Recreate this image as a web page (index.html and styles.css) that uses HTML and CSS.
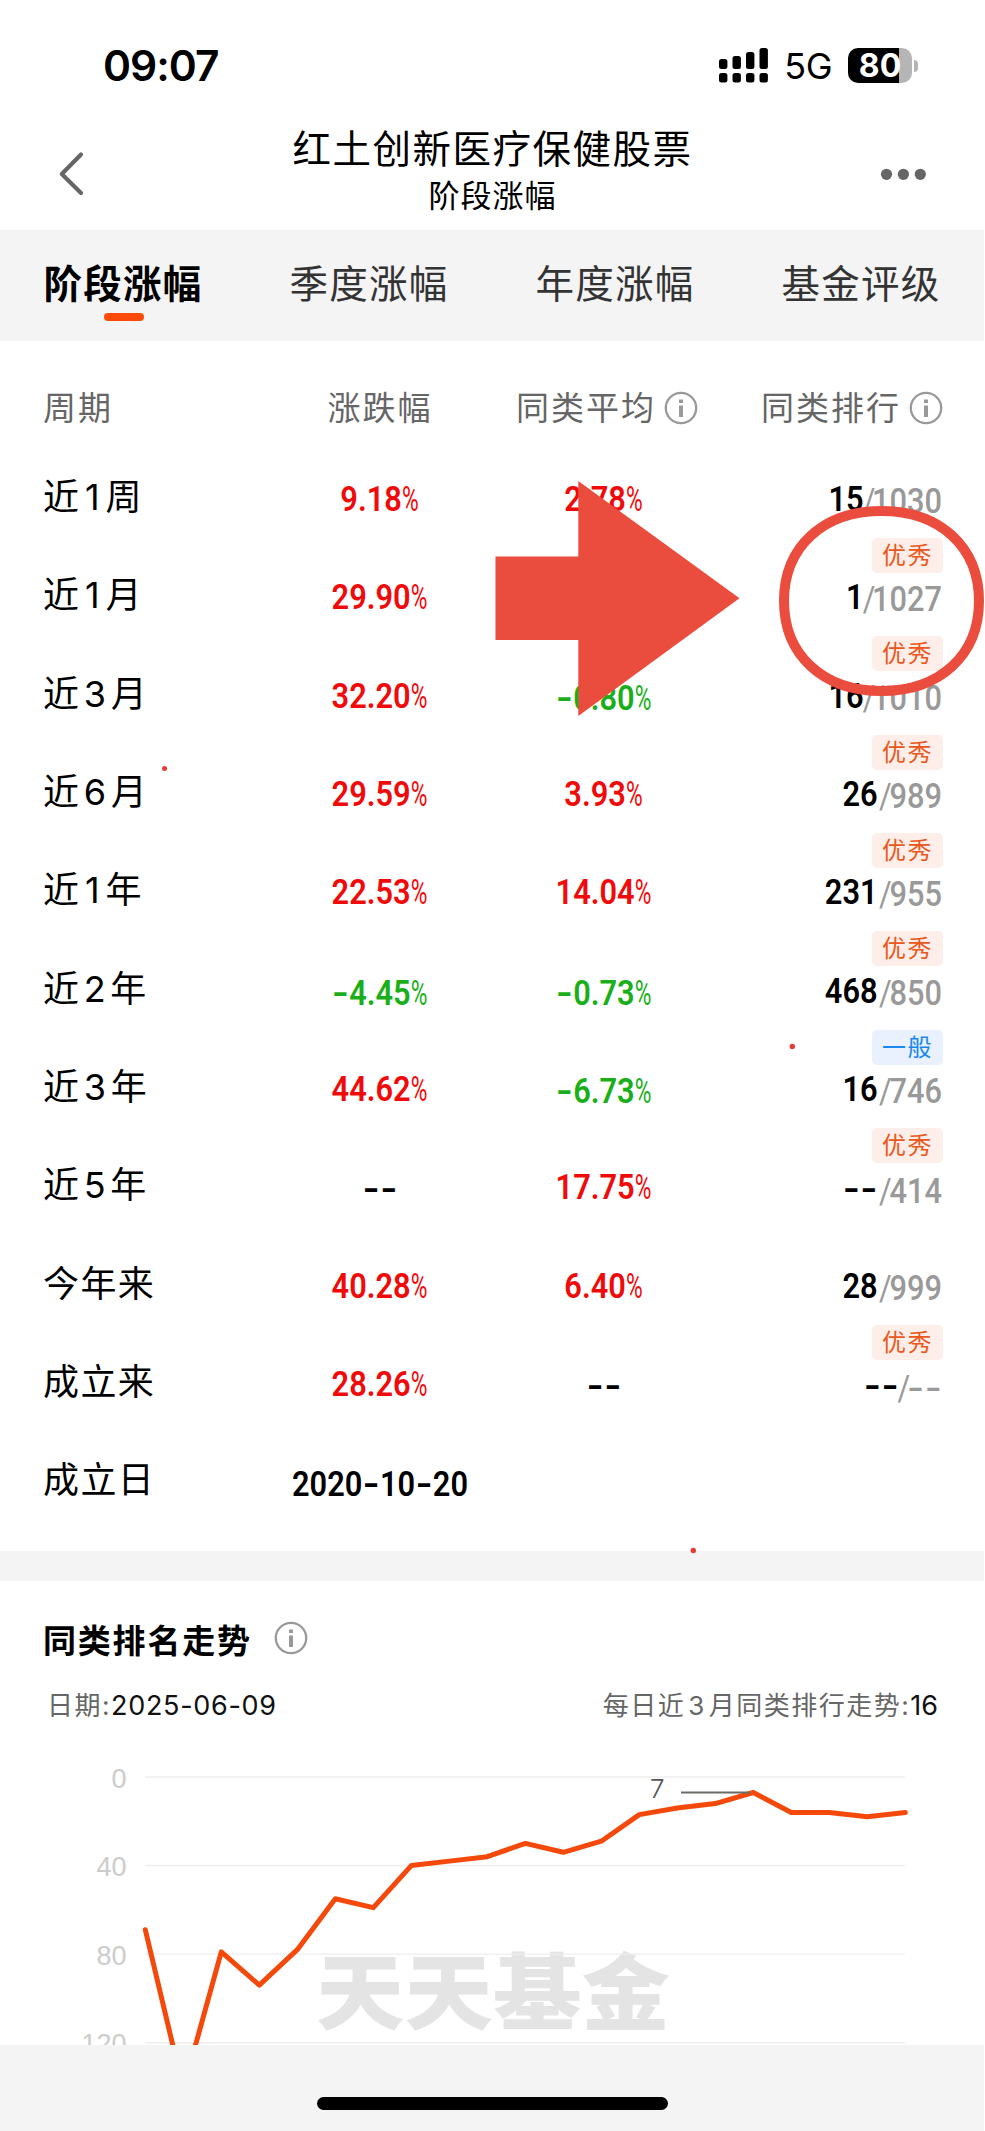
FILE: index.html
```html
<!DOCTYPE html>
<html lang="zh-CN">
<head>
  <meta charset="UTF-8">
  <title>阶段涨幅</title>
  <link rel="stylesheet" href="styles.css">
</head>
<body>
<div class="screen">

  <!-- 状态栏 -->
  <div class="status">
    <span class="time">09:07</span>
    <div class="status-right">
      <svg class="signal" width="50" height="36" viewBox="0 0 50 36">
        <rect x="0" y="11" width="8.4" height="10" rx="2.5"/>
        <rect x="13.5" y="8" width="8.4" height="13" rx="2.5"/>
        <rect x="27" y="4" width="8.4" height="17" rx="2.5"/>
        <rect x="40.5" y="0" width="8.4" height="21" rx="2.5"/>
        <rect x="0" y="25" width="8.4" height="9.5" rx="2.5"/>
        <rect x="13.5" y="25" width="8.4" height="9.5" rx="2.5"/>
        <rect x="27" y="25" width="8.4" height="9.5" rx="2.5"/>
        <rect x="40.5" y="25" width="8.4" height="9.5" rx="2.5"/>
      </svg>
      <span class="net">5G</span>
      <div class="battery"><span>80</span></div>
      <div class="battery-tip"></div>
    </div>
  </div>

  <!-- 标题 -->
  <div class="nav">
    <svg width="60" height="100" viewBox="0 0 60 100">
      <path d="M37 30.500L17.800 50L37 69" fill="none" stroke="#666" stroke-width="4.200" stroke-linecap="round" stroke-linejoin="round"/>
    </svg>
    <div class="nav-title">
      <h1>红土创新医疗保健股票</h1>
      <p>阶段涨幅</p>
    </div>
    <svg width="60" height="100" viewBox="0 0 60 100" fill="#666">
      <circle cx="22.500" cy="50.300" r="5.600"/>
      <circle cx="39.400" cy="50.300" r="5.600"/>
      <circle cx="56.300" cy="50.300" r="5.600"/>
    </svg>
  </div>

  <div class="tabs">
    <div class="tab active">阶段涨幅</div>
    <div class="tab">季度涨幅</div>
    <div class="tab">年度涨幅</div>
    <div class="tab">基金评级</div>
  </div>

  <!-- 涨幅表 -->
  <div class="table">
    <div class="row head">
      <div class="period">周期</div>
      <div class="cell">涨跌幅</div>
      <div class="cell avg">同类平均<svg class="info" width="34" height="34" viewBox="0 0 34 34"><circle cx="17" cy="17" r="15.200"/><path d="M17 14.500V26"/><path d="M17 8.500V12"/></svg></div>
      <div class="rank">同类排行<svg class="info" width="34" height="34" viewBox="0 0 34 34"><circle cx="17" cy="17" r="15.200"/><path d="M17 14.500V26"/><path d="M17 8.500V12"/></svg></div>
    </div>
    <div id="rows"></div>
  </div>

  <!-- 排名走势 -->
  <div class="trend">
    <div class="trend-title">
      <h2>同类排名走势</h2>
      <svg class="info" width="34" height="34" viewBox="0 0 34 34"><circle cx="17" cy="17" r="15.200"/><path d="M17 14.500V26"/><path d="M17 8.500V12"/></svg>
    </div>
    <div class="trend-info">
      <div>日期:<b>2025-06-09</b></div>
      <div>每日近<i>3</i>月同类排行走势:<b class="today">16</b></div>
    </div>
    <svg class="chart" id="chart" width="984" height="289" viewBox="0 0 984 289"></svg>
  </div>

  <div class="bottom"><div class="home-bar"></div></div>

  <!-- 标注 -->
  <svg class="marks" width="985" height="2131" viewBox="0 0 985 2131">
    <path d="M495.500 556.500H578.300V481L739.500 598.300L578.300 716V640H495.500Z" fill="#ea4d3e"/>
    <path d="M784 601C784 547 823 511 881.500 511S979 547 979 601S940 691 881.500 691S784 655 784 601Z" fill="none" stroke="#ea4d3e" stroke-width="10"/>
    <circle cx="792.300" cy="1046.500" r="2.700" fill="#e63c32"/>
    <circle cx="693.300" cy="1550.500" r="2.700" fill="#e63c32"/>
    <circle cx="164.500" cy="768.500" r="2.500" fill="#e63c32"/>
  </svg>
</div>

<script>
  const rows = [
    ["近1周", "9.18%", "2.78%", "15", "1030", "优秀"],
    ["近1月", "29.90%", "", "1", "1027", "优秀"],
    ["近3月", "32.20%", "-0.80%", "16", "1010", "优秀"],
    ["近6月", "29.59%", "3.93%", "26", "989", "优秀"],
    ["近1年", "22.53%", "14.04%", "231", "955", "优秀"],
    ["近2年", "-4.45%", "-0.73%", "468", "850", "一般"],
    ["近3年", "44.62%", "-6.73%", "16", "746", "优秀"],
    ["近5年", "--", "17.75%", "--", "414", ""],
    ["今年来", "40.28%", "6.40%", "28", "999", "优秀"],
    ["成立来", "28.26%", "--", "--", "--", ""],
    ["成立日", "2020-10-20", "", "", "", ""]
  ];

  const num = s => s.replace(/-/g, '<i class="dash">-</i>').replace("%", '<i class="pct">%</i>');
  const color = s => !s.endsWith("%") ? "" : s[0] === "-" ? "down" : "up";

  document.getElementById("rows").innerHTML = rows.map(r => `
    <div class="row">
      <div class="period">${r[0].replace(/\d/, '<i>$&</i>')}</div>
      <div class="cell"><span class="num ${color(r[1])}">${num(r[1])}</span></div>
      <div class="cell"><span class="num ${color(r[2])}">${num(r[2])}</span></div>
      <div class="rank">
        ${r[4] ? `<span class="num">${num(r[3])}<em><i class="slash ${/^[2-9]/.test(r[4]) ? "wide" : ""}">/</i>${num(r[4])}</em></span>` : ""}
        ${r[5] ? `<span class="tag ${r[5] === "一般" ? "normal" : ""}">${r[5]}</span>` : ""}
      </div>
    </div>`).join("");

  // 走势图
  const data = [69, 141, 79, 94, 78, 55, 59, 40, 38, 36, 30, 34, 29, 17, 14, 12, 7, 16, 16, 18, 16];
  const px = i => 145.3 + i * 38;
  const py = v => 21 + v * 2.214;
  let svg = '<text class="watermark" transform="translate(316 267) scale(1 .94)">天天基金</text>';
  [0, 40, 80, 120].forEach(v => {
    svg += `<line class="grid" x1="145" x2="905" y1="${py(v)}" y2="${py(v)}"/>`;
    svg += `<text class="axis" x="126.500" y="${py(v) + 10.5}">${v}</text>`;
  });
  svg += `<polyline class="line" points="${data.map((v, i) => px(i) + "," + py(v)).join(" ")}"/>`;
  svg += `<line class="lead" x1="681" x2="750" y1="${py(7)}" y2="${py(7)}"/><text class="peak" x="650" y="42">7</text>`;
  document.getElementById("chart").innerHTML = svg;
</script>
</body>
</html>
```

FILE: styles.css
```css
* { box-sizing: border-box; }
body { margin: 0; background: #fff; font-family: "Inter", "Noto Sans CJK SC", sans-serif; color: #000; }
h1, h2, p { margin: 0; font-weight: 400; }
i, em { font-style: normal; }
.screen { position: relative; width: 984px; height: 2131px; overflow: hidden; }

.status { display: flex; justify-content: space-between; align-items: center; height: 124px; padding: 7px 66px 0 103px; }
.time { font-size: 42.5px; font-weight: 600; letter-spacing: -1px; }
.status-right { display: flex; align-items: center; }
.net { margin: 0 16px 0 15px; font-size: 36px; letter-spacing: -0.5px; }
.battery { width: 64px; height: 35px; border-radius: 10px; background: linear-gradient(90deg, #000 51px, #b5b5b5 51px); color: #fff; font-size: 32px; font-weight: 700; line-height: 35px; text-align: center; }
.battery-tip { width: 4px; height: 12px; margin-left: 2px; border-radius: 0 5px 5px 0; background: #b5b5b5; }

.nav { display: flex; justify-content: space-between; height: 106px; padding: 0 40px 0 44px; }
.nav svg { flex: none; overflow: visible; }
.nav svg:last-child { margin-right: 20px; }
.nav-title { text-align: center; padding: 1px 0 0 17px; }
.nav h1 { font-size: 38.5px; line-height: 49px; letter-spacing: 1.5px; }
.nav p { font-size: 31px; line-height: 44px; letter-spacing: 1px; }

.tabs { display: flex; height: 111px; background: #f4f4f4; }
.tab { display: flex; flex-direction: column; align-items: center; flex: 1; padding-top: 26px; font-size: 38.5px; line-height: 57px; letter-spacing: 1.3px; color: #333; }
.active { color: #000; font-weight: 700; }
.active::after { content: ""; width: 40px; height: 8px; margin-left: 2px; border-radius: 4px; background: #fd4a08; }

.table { height: 1210px; padding-top: 32px; }
.row { display: grid; grid-template-columns: 254px 252px 196px 282px; height: 98.35px; }
.head { height: 75px; font-size: 33px; line-height: 71px; letter-spacing: 2px; color: #666; }
.period { padding-left: 43px; white-space: nowrap; }
.row:not(.head) .period { font-size: 36px; line-height: 99px; letter-spacing: 1.4px; }
.period i { display: inline-block; min-width: 18.5px; margin: 0 3.3px; text-align: center; }
.cell { text-align: center; white-space: nowrap; }
.avg { display: flex; align-items: center; height: 70px; padding-left: 10px; }
.rank { text-align: right; padding-right: 42px; white-space: nowrap; }
.head .rank { display: flex; align-items: center; justify-content: flex-end; height: 70px; padding-right: 41px; }
.info { flex: none; margin-left: 8px; fill: none; stroke: #999; stroke-width: 2.3; }
.info path { stroke-width: 4; }

.num { display: inline-block; font-family: "Roboto", sans-serif; font-size: 35px; font-weight: 600; line-height: 104px; transform: scaleX(.88); }
.up { color: #f00a0a; }
.down { color: #1aaf1a; }
.pct { display: inline-block; margin-right: -6px; font-weight: 400; transform: scaleX(.74); transform-origin: left; }
.dash { display: inline-block; width: 20px; font-family: "Inter", sans-serif; text-align: center; transform: scaleX(1.2); }
.rank .num { display: block; height: 90px; transform-origin: right; }
.rank em { position: relative; top: 2px; color: #999; font-weight: 500; }
.slash { margin: 0 -4px 0 -1px; font-weight: 400; }
.slash.wide { margin: 0 -2.5px 0 1.5px; }
.tag { display: block; position: relative; width: 71px; height: 35px; margin-left: auto; margin-right: -1px; border-radius: 5px; background: #feeee9; color: #ea5820; font-size: 24px; line-height: 36px; letter-spacing: 1.5px; text-align: center; }
.normal { background: #e9f1fe; color: #1a86ee; }

.trend { height: 494px; border-top: 30px solid #f4f4f4; }
.trend-title { display: flex; align-items: center; height: 116px; padding-left: 43px; }
.trend h2 { font-size: 33px; font-weight: 700; letter-spacing: 1.8px; }
.trend-title .info { margin-left: 22px; margin-top: -2px; }
.trend-info { display: flex; justify-content: space-between; height: 59px; padding: 0 46px 0 47px; font-size: 26px; line-height: 17px; letter-spacing: 1.5px; color: #666; }
.trend-info b { font-weight: 400; color: #111; letter-spacing: .7px; font-size: 27px; }
.trend-info .today { letter-spacing: 0; }
.trend-info i { margin: 0 3px; }
.chart { display: block; }
.watermark { font: 900 88.5px "Noto Sans CJK SC", sans-serif; fill: #e4e4e4; }
.grid { stroke: #eee; stroke-width: 1.4; }
.axis { font: 27px "Liberation Sans", sans-serif; fill: #ccc; text-anchor: end; }
.line { fill: none; stroke: #f4490b; stroke-width: 5; stroke-linecap: round; stroke-linejoin: round; }
.lead { stroke: #6b6b66; stroke-width: 2.2; }
.peak { font: 300 26px "Inter", sans-serif; fill: #555; }

.bottom { height: 86px; padding-top: 52px; background: #f4f4f4; }
.home-bar { width: 351px; height: 12.5px; margin: 0 auto; border-radius: 7px; background: #000; }
.marks { position: absolute; left: 0; top: 0; }
```
